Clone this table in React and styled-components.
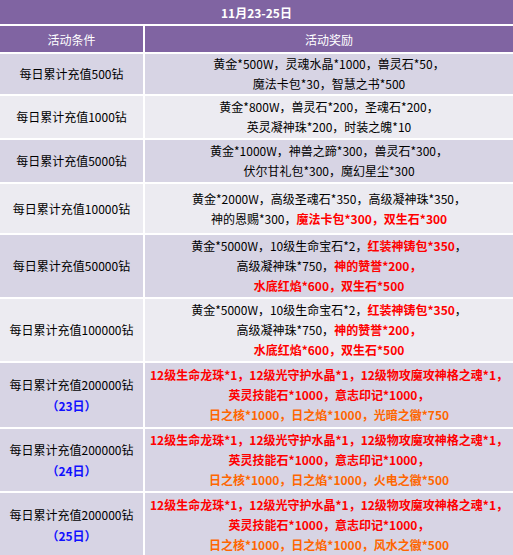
import React from "react";
import styled, { createGlobalStyle } from "styled-components";

const GlobalStyle = createGlobalStyle`
    body{
        margin:0;
        background:#fff;
        font-family:"Noto Sans CJK SC", "Liberation Sans", sans-serif;
    }
`

const Table = styled.div`
    width:513px;
    display:grid;
    grid-template-columns:143px 1fr;
    gap:2px;
    background:#fff;
    font-size:12px;
`

const TitleCell = styled.div`
    grid-column:1 / -1;
    height:24px;
    background:#8064a2;
    color:#fff;
    font-weight:700;
    display:flex;
    align-items:center;
    justify-content:center;
`

const HeadCell = styled.div`
    height:26px;
    background:#8064a2;
    color:#fff;
    display:flex;
    align-items:center;
    justify-content:center;
`

const Cell = styled.div`
    height:${({$h})=>$h}px;
    background:${({$tone})=>$tone==="light" ? "#ecebf1" : "#d7d4e4"};
    color:#000;
    display:flex;
    flex-direction:column;
    align-items:center;
    justify-content:center;
    text-align:center;
    line-height:20px;
    white-space:nowrap;
`

const Day = styled.div`
    color:#1010ff;
    font-weight:700;
    margin-top:1px;
`

const Seg = styled.span`
    color:${({$c})=>$c==="red" ? "#ff0000" : $c==="orange" ? "#ff6600" : "#000"};
    font-weight:${({$c})=>$c ? 700 : 400};
`

const top3 = (last)=>[
    [["12级生命龙珠*1，12级光守护水晶*1，12级物攻魔攻神格之魂*1，","red"]],
    [["英灵技能石*1000，意志印记*1000，","red"]],
    [["日之核*1000，日之焰*1000，"+last,"orange"]],
]

const big = [
    [["黄金*5000W，10级生命宝石*2，"],["红装神铸包*350","red"],["，"]],
    [["高级凝神珠*750，"],["神的赞誉*200，","red"]],
    [["水底红焰*600，双生石*500","red"]],
]

const rows = [
    {cond:"每日累计充值500钻", tone:"dark", h:40, lines:[
        [["黄金*500W，灵魂水晶*1000，兽灵石*50，"]],
        [["魔法卡包*30，智慧之书*500"]],
    ]},
    {cond:"每日累计充值1000钻", tone:"light", h:42, lines:[
        [["黄金*800W，兽灵石*200，圣魂石*200，"]],
        [["英灵凝神珠*200，时装之魄*10"]],
    ]},
    {cond:"每日累计充值5000钻", tone:"dark", h:42, lines:[
        [["黄金*1000W，神兽之蹄*300，兽灵石*300，"]],
        [["伏尔甘礼包*300，魔幻星尘*300"]],
    ]},
    {cond:"每日累计充值10000钻", tone:"light", h:49, lines:[
        [["黄金*2000W，高级圣魂石*350，高级凝神珠*350，"]],
        [["神的恩赐*300，"],["魔法卡包*300，双生石*300","red"]],
    ]},
    {cond:"每日累计充值50000钻", tone:"dark", h:62, lines:big},
    {cond:"每日累计充值100000钻", tone:"light", h:62, lines:big},
    {cond:"每日累计充值200000钻", day:"（23日）", tone:"dark", h:64, lines:top3("光暗之徽*750")},
    {cond:"每日累计充值200000钻", day:"（24日）", tone:"dark", h:62, lines:top3("火电之徽*500")},
    {cond:"每日累计充值200000钻", day:"（25日）", tone:"dark", h:64, lines:top3("风水之徽*500")},
]

const App = ()=>{
    return(
        <>
            <GlobalStyle/>
            <Table>
                <TitleCell>11月23-25日</TitleCell>
                <HeadCell>活动条件</HeadCell>
                <HeadCell>活动奖励</HeadCell>
                {
                    rows.map((row,i)=>(
                        <React.Fragment key={i}>
                            <Cell $tone={row.tone} $h={row.h}>
                                <div>{row.cond}</div>
                                {row.day && <Day>{row.day}</Day>}
                            </Cell>
                            <Cell $tone={row.tone} $h={row.h}>
                                {row.lines.map((line,j)=>(
                                    <div key={j}>
                                        {line.map(([t,c],k)=><Seg key={k} $c={c}>{t}</Seg>)}
                                    </div>
                                ))}
                            </Cell>
                        </React.Fragment>
                    ))
                }
            </Table>
        </>
    )
}

export default App
